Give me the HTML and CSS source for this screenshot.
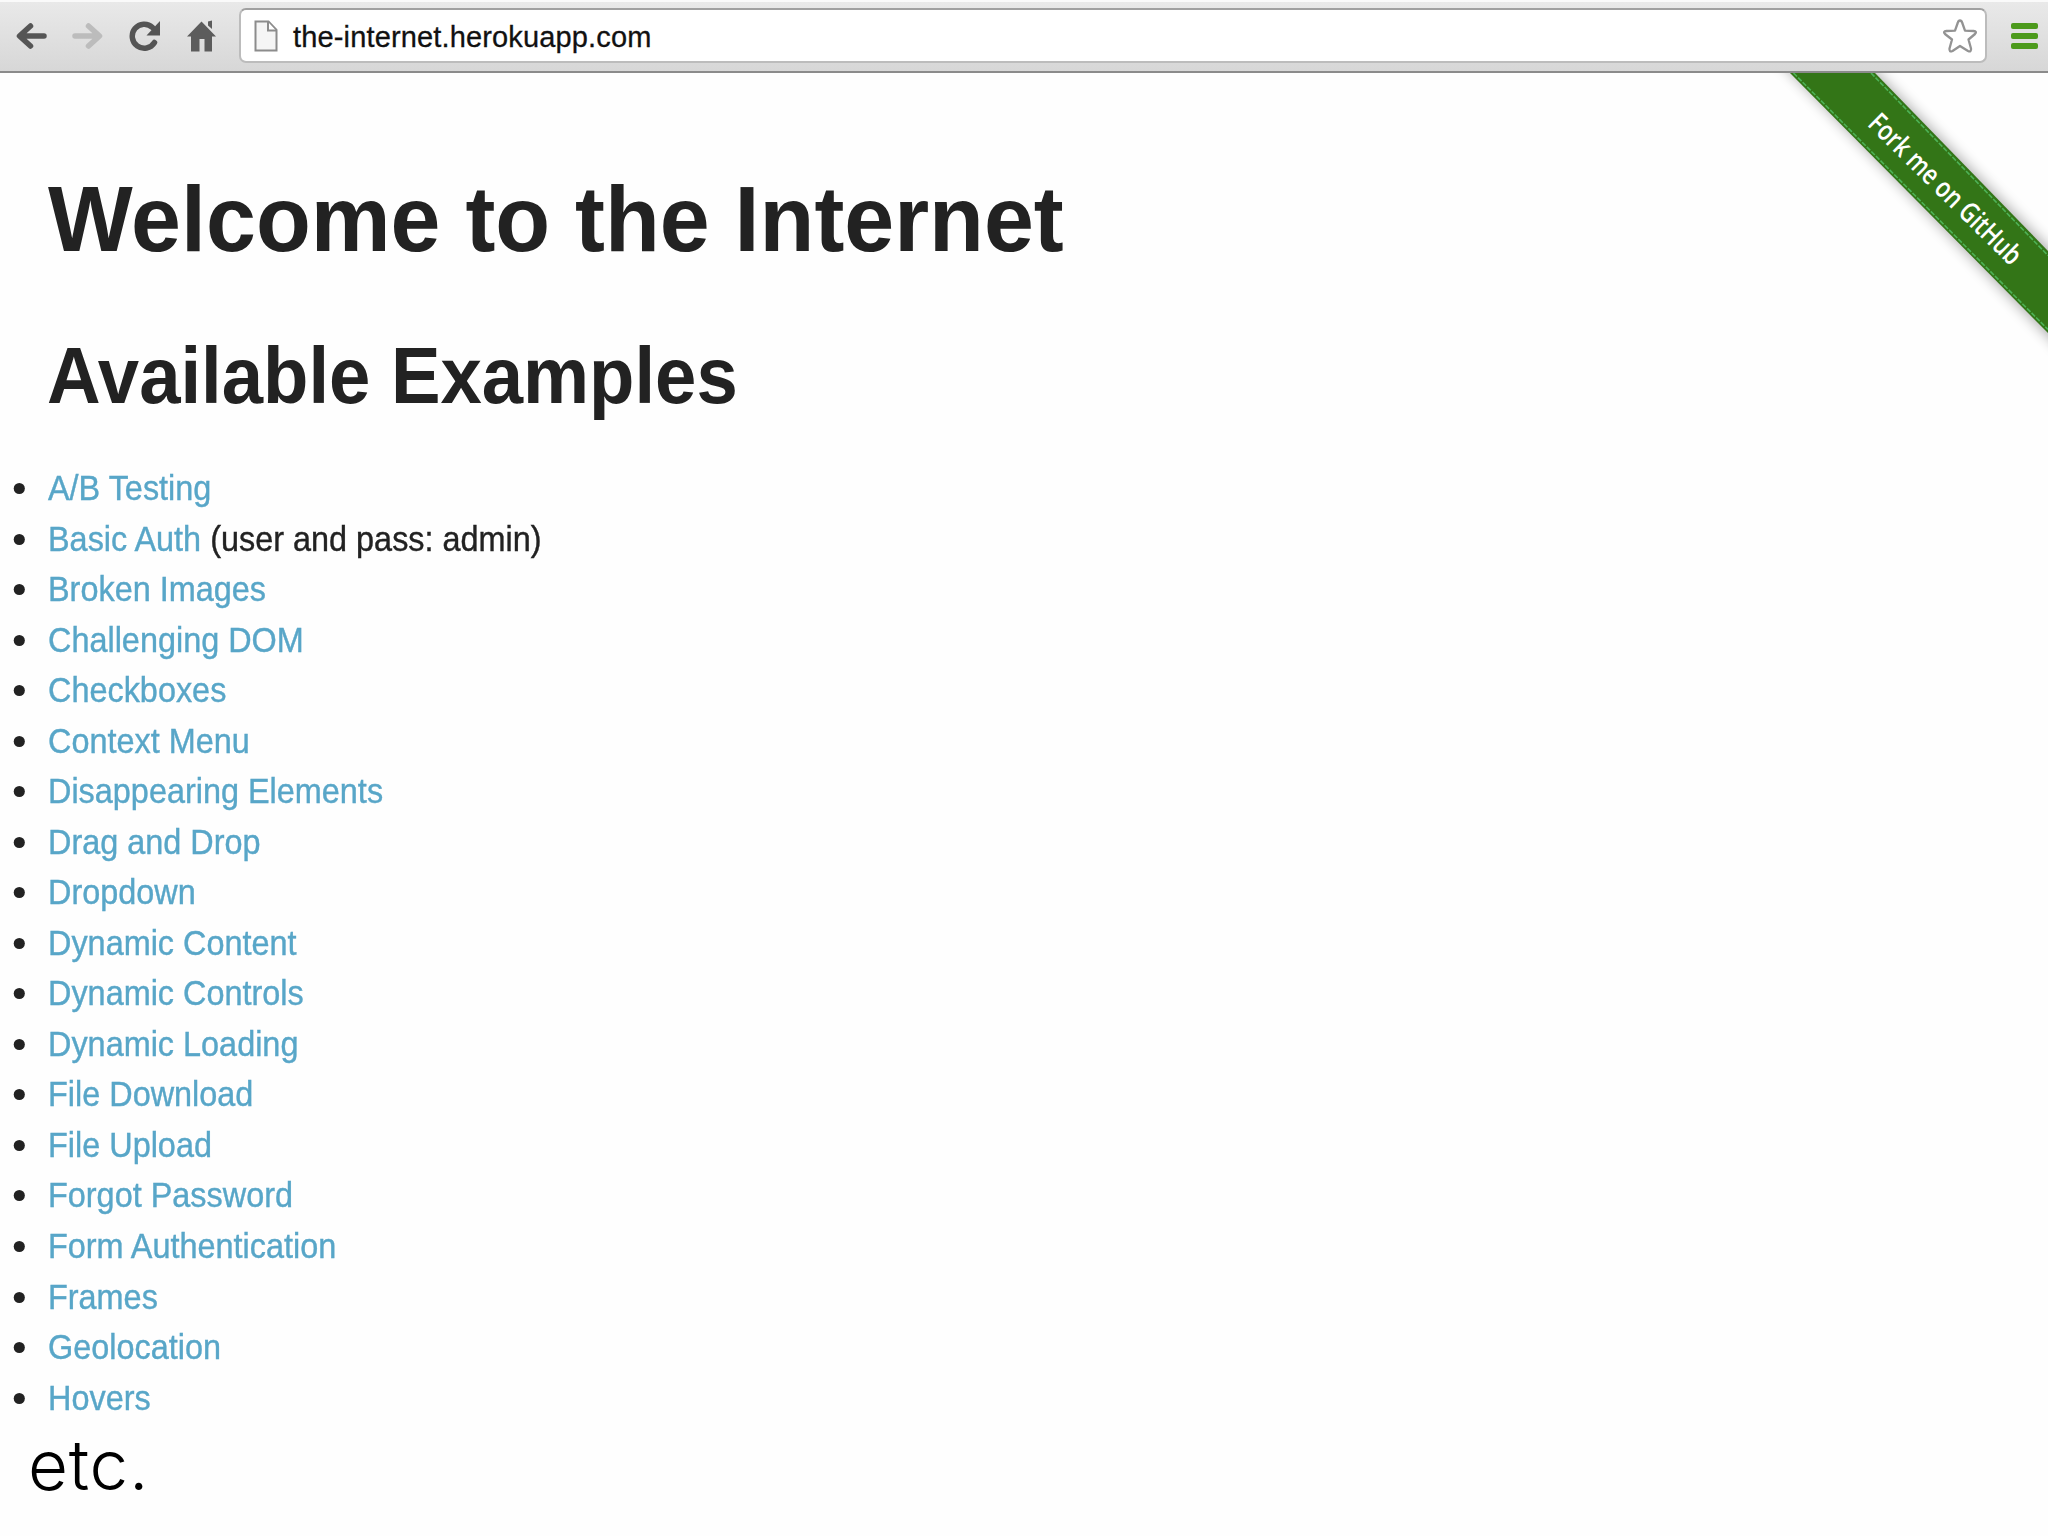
FILE: index.html
```html
<!DOCTYPE html>
<html lang="en">
<head>
<meta charset="utf-8">
<title>The Internet</title>
<link rel="stylesheet" href="styles.css">
</head>
<body>
<header class="toolbar">
  <nav class="nav">
    <svg class="icon" width="32" height="32" viewBox="0 0 32 32"><path d="M29 16H5M15.500 6L4.500 16L15.500 26" fill="none" stroke="#555" stroke-width="5.500" stroke-linecap="round" stroke-linejoin="round"/></svg>
    <svg class="icon" width="32" height="32" viewBox="0 0 32 32"><path d="M3 16H27M16.500 6L27.500 16L16.500 26" fill="none" stroke="#bcbcbc" stroke-width="5.500" stroke-linecap="round" stroke-linejoin="round"/></svg>
    <svg class="icon" width="32" height="32" viewBox="0 0 32 32"><path d="M25.500 22.500A12 12 0 1 1 23.500 7.500" fill="none" stroke="#555" stroke-width="5.500" stroke-linecap="round"/><path d="M31 1V15.500H17.500Z" fill="#555"/></svg>
    <svg class="icon" width="32" height="32" viewBox="0 0 32 32"><path d="M15.500 1.500L30 16.500H26V31.500H18.500V19H13.500V31.500H5V16.500H1Z" fill="#5c5c5c"/><path d="M22 1.500L26 .5V9L22 5.500Z" fill="#5c5c5c"/></svg>
  </nav>
  <div class="address">
    <svg class="page-icon" width="24" height="32" viewBox="0 0 24 32"><path d="M1.500 1.500H14.500L22.500 10V30.500H1.500Z" fill="#f5f5f5" stroke="#8c8c8c" stroke-width="2"/><path d="M14 2V10.500H22" fill="#fff" stroke="#8c8c8c" stroke-width="2"/></svg>
    <span class="url">the-internet.herokuapp.com</span>
    <svg class="star" width="38" height="38" viewBox="0 0 38 38"><path d="M19 3.500Q20.500 3.500 21.300 6L24 13.700L32.500 14Q36.500 14.500 34 17L27.500 22.500L30 31.500Q30.500 35.500 27 34L19 29L11.500 34Q8 35.500 8.500 31.500L11 22.500L4 17Q1.500 14.500 5.500 14L14 13.700L16.700 6Q17.500 3.500 19 3.500Z" fill="#fff" stroke="#939393" stroke-width="2.300" stroke-linejoin="round"/></svg>
  </div>
  <div class="menu"><i class="bar"></i><i class="bar"></i><i class="bar"></i></div>
</header>
<main class="page">
  <svg class="ribbon" width="278" height="310" viewBox="0 0 278 310">
    <defs><filter id="shade" x="-20%" y="-20%" width="140%" height="140%"><feGaussianBlur stdDeviation="7"/></filter></defs>
    <path d="M2 -20H87L320 217V306Z" fill="#000" opacity=".32" filter="url(#shade)"/>
    <path d="M20 0H105L278 178V260Z" fill="#337517"/>
    <path d="M23.500 0L278 256.500M101 0L278 182.500" stroke="#4db257" stroke-width="1.600" stroke-dasharray="5 1.500" fill="none"/>
    <text class="ribbon-text" transform="translate(96.500 52) rotate(44.500)" textLength="202" lengthAdjust="spacingAndGlyphs">Fork me on GitHub</text>
  </svg>
  <h1 class="title">Welcome to the Internet</h1>
  <h2 class="subtitle">Available Examples</h2>
  <ul class="examples">
    <li><a>A/B Testing</a></li>
    <li><a>Basic Auth</a> (user and pass: admin)</li>
    <li><a>Broken Images</a></li>
    <li><a>Challenging DOM</a></li>
    <li><a>Checkboxes</a></li>
    <li><a>Context Menu</a></li>
    <li><a>Disappearing Elements</a></li>
    <li><a>Drag and Drop</a></li>
    <li><a>Dropdown</a></li>
    <li><a>Dynamic Content</a></li>
    <li><a>Dynamic Controls</a></li>
    <li><a>Dynamic Loading</a></li>
    <li><a>File Download</a></li>
    <li><a>File Upload</a></li>
    <li><a>Forgot Password</a></li>
    <li><a>Form Authentication</a></li>
    <li><a>Frames</a></li>
    <li><a>Geolocation</a></li>
    <li><a>Hovers</a></li>
  </ul>
  <p class="more">etc.</p>
</main>
</body>
</html>
```
FILE: styles.css
```css
* { box-sizing: border-box; }
body {
  margin: 0;
  height: 1536px;
  overflow: hidden;
  background: #fefefe;
  color: #222;
  font-family: "Liberation Sans", Arial, sans-serif;
}
.toolbar {
  display: flex;
  align-items: center;
  height: 73px;
  padding: 0 10px 2px 15px;
  border-top: 2px solid #fafafa;
  border-bottom: 2px solid #8b8b8b;
  background: linear-gradient(#e9e9e9, #d7d7d7);
}
.nav { display: flex; gap: 25px; width: 224px; }
.icon { flex: none; }
.address {
  display: flex;
  align-items: center;
  width: 1748px;
  height: 55px;
  padding: 0 6px 0 13px;
  border: 2px solid #bcbcbc;
  border-top-color: #a0a0a0;
  border-radius: 7px;
  background: #fff;
}
.url {
  flex: 1;
  padding: 2px 0 0 15px;
  color: #111;
  font-size: 29px;
  letter-spacing: .15px;
  line-height: 40px;
  -webkit-text-stroke: .3px #111;
}
.menu { display: flex; flex-direction: column; gap: 4px; margin-left: 24px; }
.bar { width: 27px; height: 6px; border-radius: 2px; background: #4c9a1c; }
.page { position: relative; padding: 96px 0 0 48px; }
.ribbon { position: absolute; top: 0; right: 0; }
.ribbon-text { fill: #fff; font: 600 28px "Open Sans", sans-serif; }
.title, .subtitle, .examples { transform-origin: 0 0; }
.title {
  width: max-content;
  margin: 0;
  font-size: 93.5px;
  line-height: 100px;
  transform: scaleX(.960);
}
.subtitle {
  width: max-content;
  margin: 65px 0 0 -1px;
  font-size: 79px;
  line-height: 84px;
  transform: scaleX(.940);
}
.examples {
  width: max-content;
  margin: 45px 0 0;
  padding: 0;
  list-style: none;
  font-size: 35px;
  line-height: 50.53px;
  transform: scaleX(.926);
}
.examples li { white-space: pre; -webkit-text-stroke: .4px; }
.examples li::before {
  content: "";
  display: inline-block;
  width: 12px;
  height: 11px;
  margin: 0 25px 6px -37px;
  border-radius: 50%;
  background: #222;
  vertical-align: baseline;
}
.examples a { color: #58a6c8; }
.more {
  margin: 2px 0 0 -20px;
  color: #000;
  font-family: Inter, sans-serif;
  font-size: 69px;
  font-weight: 300;
  letter-spacing: .8px;
  line-height: 80px;
}
```
